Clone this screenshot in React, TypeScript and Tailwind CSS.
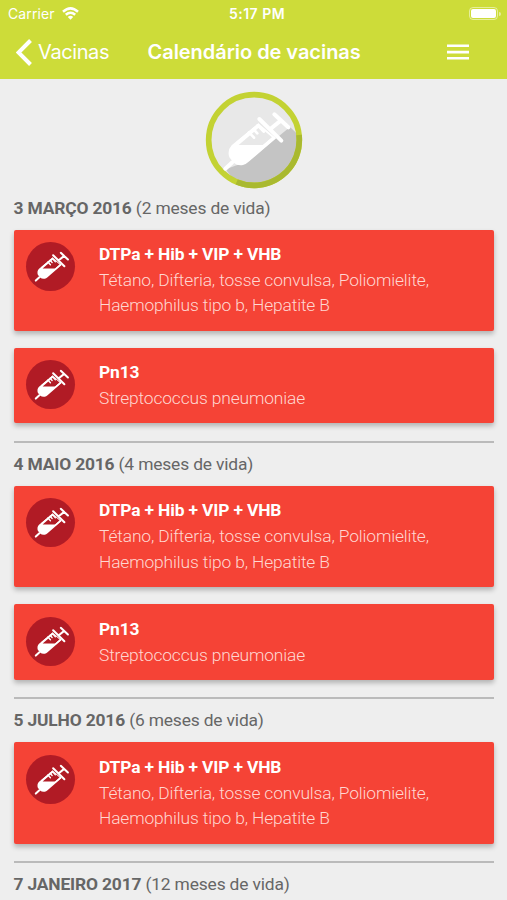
import React from "react";

const shots = {
  combo: {
    name: "DTPa + Hib + VIP + VHB",
    lines: ["Tétano, Difteria, tosse convulsa, Poliomielite,", "Haemophilus tipo b, Hepatite B"],
  },
  pn13: { name: "Pn13", lines: ["Streptococcus pneumoniae"] },
};

type Shot = { name: string; lines: string[] };

const periods: { date: string; age: string; shots: Shot[] }[] = [
  { date: "3 MARÇO 2016", age: "(2 meses de vida)", shots: [shots.combo, shots.pn13] },
  { date: "4 MAIO 2016", age: "(4 meses de vida)", shots: [shots.combo, shots.pn13] },
  { date: "5 JULHO 2016", age: "(6 meses de vida)", shots: [shots.combo] },
  { date: "7 JANEIRO 2017", age: "(12 meses de vida)", shots: [] },
];

function Syringe({ hollow }: { hollow: string }) {
  return (
    <g strokeLinecap="round" strokeLinejoin="round">
      <path d="M91 264L112 245" stroke="#fff" strokeWidth="12" />
      <path
        d="M190 128L110 194Q96 209 103 230L116 246Q128 256 144 253Q152 251 160 244L243 173Z"
        fill="#fff"
      />
      <path d="M194 139L131 193L205 193L231 170Z" fill={hollow} />
      <path d="M162 155L177 171M175 145L187 158M188 134L206 153" stroke="#fff" strokeWidth="8" />
      <path d="M190 133L126 187M236 171L205 197" stroke="#fff" strokeWidth="8" />
      <path d="M193 115L259 180M226 145L258 119M238 101L280 140" stroke="#fff" strokeWidth="12" fill="none" />
    </g>
  );
}

function VaccineLogo() {
  return (
    <svg className="h-[98px] w-[98px]" viewBox="30 31 294 294" fill="none">
      <circle cx="177" cy="178" r="136" fill="#e8e8e8" />
      <path d="M92 266L162 240L285 139L317 170A144 144 0 0 1 128 314Z" fill="#c4c4c4" />
      <circle cx="177" cy="178" r="136" stroke="#c3d233" strokeWidth="17" />
      <path d="M312 163A136 136 0 0 1 125 304" stroke="#a9b930" strokeWidth="17" />
      <Syringe hollow="#e8e8e8" />
    </svg>
  );
}

function ShotBadge() {
  return (
    <div className="h-[49px] w-[49px] shrink-0 rounded-full bg-[#b11b25]">
      <svg className="h-full w-full" viewBox="0 0 147 147" fill="none">
        <g transform="translate(-17 -19) scale(0.51)">
          <Syringe hollow="#b11b25" />
        </g>
      </svg>
    </div>
  );
}

function ShotCard({ shot }: { shot: Shot }) {
  return (
    <div className="flex rounded-[2px] bg-[#f54336] pt-[12.4px] pb-[11.6px] pl-[12.5px] shadow-[0_3px_5px_rgba(0,0,0,0.25)]">
      <ShotBadge />
      <div className="ml-6 text-[17.4px] leading-[25.7px] tracking-[-0.14px] whitespace-nowrap">
        <div className="font-bold text-white">{shot.name}</div>
        {shot.lines.map((line) => (
          <div key={line} className="font-light text-[#ffd8d2]">{line}</div>
        ))}
      </div>
    </div>
  );
}

export default function App() {
  return (
    <div className="h-[900px] w-[507px] overflow-hidden bg-[#eee] font-[Roboto,sans-serif]">
      <header className="h-[79px] bg-[#cddc39] font-[Inter,sans-serif] text-white">
        <div className="grid h-[27px] grid-cols-3 items-center pr-[6px] pl-2 text-[14px] leading-none">
          <div className="flex items-center gap-[7px]">
            <span className="tracking-[0.1px]">Carrier</span>
            <svg className="h-[13px] w-[17px]" viewBox="0 0 17 13" fill="none" stroke="#fff" strokeWidth="2.5">
              <path d="M1 4.8Q8.5 -2 16 4.8M3.8 7.8Q8.5 3.6 13.2 7.8" />
              <path d="M5.8 10Q8.5 7.6 11.2 10L8.5 12.8Z" fill="#fff" stroke="none" />
            </svg>
          </div>
          <span className="pl-[5px] text-center font-semibold tracking-[0.5px]">5:17 PM</span>
          <div className="flex items-center justify-end gap-px">
            <div className="h-[13px] w-[29px] rounded-[4px] border border-white/50 p-px">
              <div className="h-full rounded-[2px] bg-white" />
            </div>
            <div className="h-1 w-[2px] rounded-r bg-white/50" />
          </div>
        </div>
        <div className="flex h-[50px] items-center pl-4">
          <svg className="h-[27px] w-4" viewBox="0 0 16 27" fill="none" stroke="#fff" strokeWidth="4">
            <path d="M14.5 1.5L2.5 13.5L14.5 25.5" />
          </svg>
          <span className="ml-[6px] w-[109.5px] text-[20px] font-normal tracking-[-0.4px] whitespace-nowrap">Vacinas</span>
          <span className="w-[299.5px] text-[20px] font-semibold tracking-[-0.04px] whitespace-nowrap">Calendário de vacinas</span>
          <svg className="h-4 w-[22px]" viewBox="0 0 22 16" fill="#fff">
            <path d="M0 0.5h22v2.6h-22zM0 6.8h22v2.6h-22zM0 13h22v2.6h-22z" />
          </svg>
        </div>
      </header>

      <main className="px-[13.5px] pt-3">
        <div className="flex h-[98px] justify-center">
          <VaccineLogo />
        </div>
        {periods.map((period, i) => (
          <section key={period.date} className={i === 0 ? "" : "mt-[17.2px] border-t-2 border-[#bababa]"}>
            <h2 className={i === 0 ? "h-[40.5px] pt-[6px] text-[17.4px] leading-[26px] tracking-[-0.16px] text-[#666]" : "h-[43.4px] pt-[8.4px] text-[17.4px] leading-[26px] tracking-[-0.16px] text-[#666]"}>
              <span className="font-bold">{period.date}</span> {period.age}
            </h2>
            <div className="flex flex-col gap-[17.4px]">
              {period.shots.map((shot) => (
                <ShotCard key={shot.name} shot={shot} />
              ))}
            </div>
          </section>
        ))}
      </main>
    </div>
  );
}
